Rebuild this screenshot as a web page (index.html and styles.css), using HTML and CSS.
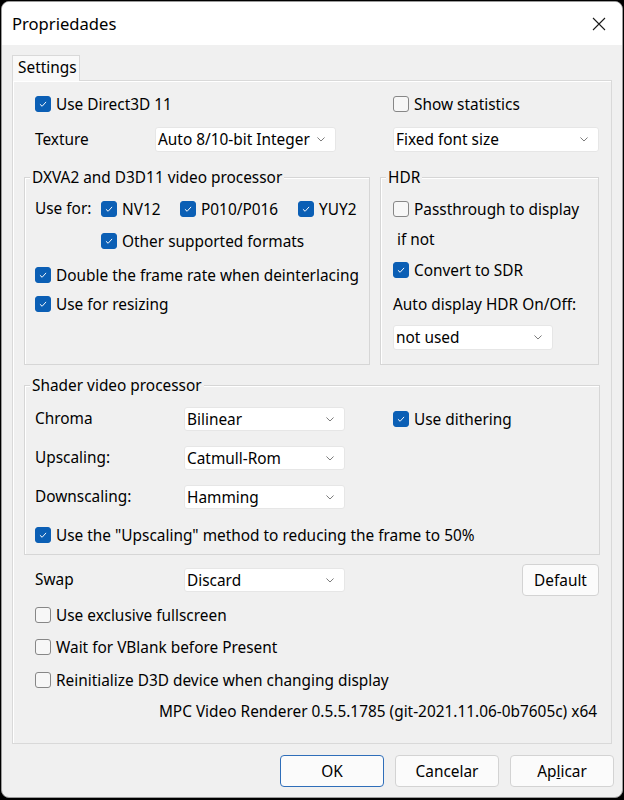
FILE: index.html
```html
<!DOCTYPE html>
<html>
<head>
<meta charset="utf-8">
<link rel="stylesheet" href="styles.css">
</head>
<body>
<div class="window">
  <div class="titlebar">
    <span class="title">Propriedades</span>
    <span class="close"><svg width="14" height="14" viewBox="0 0 14 14"><path d="M1 1 L13 13 M13 1 L1 13" stroke="#1a1a1a" stroke-width="1.1" fill="none"/></svg></span>
  </div>
  <div class="content">
    <div class="tabs"><div class="tab">Settings</div></div>
    <div class="panel">
      <div class="row2 r1">
        <div class="lcol"><label class="cb"><span class="box on"><svg viewBox="0 0 16 16"><polyline points="4.5,8.3 7,10.6 11.5,5.6"/></svg></span>Use Direct3D 11</label></div>
        <div class="rcol"><label class="cb"><span class="box"></span>Show statistics</label></div>
      </div>
      <div class="row2 r2">
        <div class="lcol"><span class="lbl lbl-tex">Texture</span><div class="combo w181"><span>Auto 8/10-bit Integer</span><svg class="chev" viewBox="0 0 9 5"><polyline points="0.5,0.5 4.5,4.5 8.5,0.5"/></svg></div></div>
        <div class="rcol"><div class="combo w206"><span>Fixed font size</span><svg class="chev" viewBox="0 0 9 5"><polyline points="0.5,0.5 4.5,4.5 8.5,0.5"/></svg></div></div>
      </div>
      <div class="row2 r3">
        <div class="group dxva">
          <div class="gtitle">DXVA2 and D3D11 video processor</div>
          <div class="drow d1">
            <span class="lbl lbl-use">Use for:</span>
            <span class="fmt f1"><label class="cb"><span class="box on"><svg viewBox="0 0 16 16"><polyline points="4.5,8.3 7,10.6 11.5,5.6"/></svg></span>NV12</label></span>
            <span class="fmt f2"><label class="cb"><span class="box on"><svg viewBox="0 0 16 16"><polyline points="4.5,8.3 7,10.6 11.5,5.6"/></svg></span>P010/P016</label></span>
            <span class="fmt"><label class="cb"><span class="box on"><svg viewBox="0 0 16 16"><polyline points="4.5,8.3 7,10.6 11.5,5.6"/></svg></span>YUY2</label></span>
          </div>
          <div class="drow d2"><label class="cb"><span class="box on"><svg viewBox="0 0 16 16"><polyline points="4.5,8.3 7,10.6 11.5,5.6"/></svg></span>Other supported formats</label></div>
          <div class="drow d3"><label class="cb"><span class="box on"><svg viewBox="0 0 16 16"><polyline points="4.5,8.3 7,10.6 11.5,5.6"/></svg></span>Double the frame rate when deinterlacing</label></div>
          <div class="drow d4"><label class="cb"><span class="box on"><svg viewBox="0 0 16 16"><polyline points="4.5,8.3 7,10.6 11.5,5.6"/></svg></span>Use for resizing</label></div>
        </div>
        <div class="group hdr">
          <div class="gtitle">HDR</div>
          <div class="hrow h1"><label class="cb"><span class="box"></span>Passthrough to display</label></div>
          <div class="hrow h2"><span class="lbl">if not</span></div>
          <div class="hrow h3"><label class="cb"><span class="box on"><svg viewBox="0 0 16 16"><polyline points="4.5,8.3 7,10.6 11.5,5.6"/></svg></span>Convert to SDR</label></div>
          <div class="hrow h4"><span class="lbl">Auto display HDR On/Off:</span></div>
          <div class="hrow h5"><div class="combo w160"><span>not used</span><svg class="chev" viewBox="0 0 9 5"><polyline points="0.5,0.5 4.5,4.5 8.5,0.5"/></svg></div></div>
        </div>
      </div>
      <div class="group shader">
        <div class="gtitle">Shader video processor</div>
        <div class="srow s1">
          <span class="lbl lbl-s">Chroma</span>
          <div class="combo w161 h24"><span>Bilinear</span><svg class="chev" viewBox="0 0 9 5"><polyline points="0.5,0.5 4.5,4.5 8.5,0.5"/></svg></div>
          <label class="cb dith"><span class="box on"><svg viewBox="0 0 16 16"><polyline points="4.5,8.3 7,10.6 11.5,5.6"/></svg></span>Use dithering</label>
        </div>
        <div class="srow s2">
          <span class="lbl lbl-s">Upscaling:</span>
          <div class="combo w161 h24"><span>Catmull-Rom</span><svg class="chev" viewBox="0 0 9 5"><polyline points="0.5,0.5 4.5,4.5 8.5,0.5"/></svg></div>
        </div>
        <div class="srow s2">
          <span class="lbl lbl-s">Downscaling:</span>
          <div class="combo w161 h24"><span>Hamming</span><svg class="chev" viewBox="0 0 9 5"><polyline points="0.5,0.5 4.5,4.5 8.5,0.5"/></svg></div>
        </div>
        <div class="srow s4"><label class="cb"><span class="box on"><svg viewBox="0 0 16 16"><polyline points="4.5,8.3 7,10.6 11.5,5.6"/></svg></span>Use the "Upscaling" method to reducing the frame to 50%</label></div>
      </div>
      <div class="swaprow">
        <span class="lbl lbl-s">Swap</span>
        <div class="combo w161 h24"><span>Discard</span><svg class="chev" viewBox="0 0 9 5"><polyline points="0.5,0.5 4.5,4.5 8.5,0.5"/></svg></div>
        <button class="btn defbtn">Default</button>
      </div>
      <div class="brow b1"><label class="cb"><span class="box"></span>Use exclusive fullscreen</label></div>
      <div class="brow b2"><label class="cb"><span class="box"></span>Wait for VBlank before Present</label></div>
      <div class="brow b3"><label class="cb"><span class="box"></span>Reinitialize D3D device when changing display</label></div>
      <div class="version">MPC Video Renderer 0.5.5.1785 (git-2021.11.06-0b7605c) x64</div>
    </div>
    <div class="buttons">
      <button class="btn dlg ok">OK</button>
      <button class="btn dlg">Cancelar</button>
      <button class="btn dlg">Ap<u>l</u>icar</button>
    </div>
  </div>
</div>
</body>
</html>
```

FILE: styles.css
```css
* { box-sizing: border-box; }
body {
  margin: 0;
  background: #000;
  font-family: "Noto Sans", "Open Sans", sans-serif;
  font-size: 15.4px;
  color: #000;
}
.window {
  margin: 1px 0 0 1px;
  width: 622px;
  height: 797px;
  border: 1px solid #9b9b9b;
  border-radius: 8px;
  overflow: hidden;
  background: #f0f0f0;
}
.titlebar {
  height: 43px;
  background: #fff;
  display: flex;
  align-items: center;
  padding-left: 10px;
}
.title { font-size: 16.6px; }
.close {
  margin-left: auto;
  width: 46px;
  display: flex;
  justify-content: center;
}
.content { padding: 10px 8px 0 10px; }
.tabs { display: flex; }
.tab {
  position: relative;
  z-index: 1;
  height: 26px;
  width: 68px;
  padding-left: 5px;
  line-height: 24px;
  background: #f9f9f9;
  border: 1px solid #d9d9d9;
  border-bottom: none;
  margin-bottom: -1px;
}
.panel {
  width: 600px;
  height: 664px;
  border: 1px solid #d9d9d9;
  box-shadow: inset 1px 1px 0 #fff;
  padding: 11px 11px 0 11px;
}
.row2 { display: grid; grid-template-columns: 356px 219px; }
.r1 { height: 24px; align-items: center; }
.r2 { height: 25px; margin-top: 11px; }
.r3 { margin-top: 25px; }
.lcol { padding-left: 11px; display: flex; align-items: center; }
.rcol { padding-left: 13px; display: flex; align-items: center; }
.lbl { white-space: nowrap; line-height: 20px; }
.lbl-tex { width: 120px; }
.cb {
  display: flex;
  align-items: center;
  gap: 5px;
  height: 20px;
  white-space: nowrap;
}
.box {
  flex: none;
  width: 16px;
  height: 16px;
  border-radius: 3px;
  border: 1px solid #878787;
  background: #f7f7f7;
}
.box.on { background: #0b5fb5; border-color: #0b5fb5; }
.box svg { display: block; width: 14px; height: 14px; }
.box svg polyline { fill: none; stroke: #fff; stroke-width: 1.1; }
.combo {
  display: flex;
  align-items: center;
  justify-content: space-between;
  height: 25px;
  background: #fff;
  border: 1px solid #e6e6e6;
  border-radius: 3px;
  padding: 0 10px 0 2px;
  white-space: nowrap;
}
.combo.h24 { height: 24px; }
.w181 { width: 181px; }
.w206 { width: 206px; }
.w160 { width: 160px; }
.w161 { width: 161px; }
.chev { width: 8px; height: 4.5px; }
.chev polyline { fill: none; stroke: #6a6a6a; stroke-width: 1; }
.group {
  border: 1px solid #d6d6d6;
  box-shadow: inset 1px 1px 0 #fff;
}
.dxva { width: 346px; height: 188px; }
.hdr { height: 188px; }
.gtitle {
  width: fit-content;
  margin: -10px 0 0 5px;
  padding: 0 2px;
  line-height: 20px;
  background: #f0f0f0;
}
.drow { display: flex; align-items: center; height: 20px; padding-left: 10px; }
.d1 { margin-top: 11px; }
.d2 { margin-top: 12px; padding-left: 76px; }
.d3 { margin-top: 14px; }
.d4 { margin-top: 9px; }
.lbl-use { width: 66px; }
.f1 { width: 79px; }
.f2 { width: 118px; }
.hrow { display: flex; align-items: center; padding-left: 12px; min-height: 20px; }
.h1 { margin-top: 11px; }
.h2 { margin-top: 11px; padding-left: 16px; }
.h3 { margin-top: 10px; }
.h4 { margin-top: 15px; }
.h5 { margin-top: 10px; }
.shader { margin-top: 20px; padding-bottom: 9px; }
.srow { display: flex; align-items: center; padding-left: 10px; height: 24px; }
.s1 { margin-top: 11px; }
.s2 { margin-top: 15px; }
.s4 { margin-top: 16px; height: 20px; }
.lbl-s { width: 149px; }
.dith { margin-left: 48px; }
.swaprow {
  display: flex;
  align-items: center;
  height: 32px;
  margin-top: 9px;
  padding-left: 11px;
  padding-right: 1px;
}
.btn {
  font-family: inherit;
  font-size: 15.4px;
  color: #000;
  background: #fbfbfb;
  border: 1px solid #d3d3d3;
  border-radius: 4px;
  padding: 0;
}
.defbtn { margin-left: auto; width: 77px; height: 32px; }
.brow { padding-left: 11px; }
.b1 { margin-top: 9px; }
.b2 { margin-top: 12px; }
.b3 { margin-top: 13px; }
.version {
  margin-top: 12px;
  line-height: 20px;
  text-align: right;
  padding-right: 3px;
  white-space: nowrap;
}
.buttons {
  display: flex;
  justify-content: flex-end;
  gap: 11px;
  margin-top: 11px;
}
.dlg { width: 104px; height: 32px; }
.ok { border-color: #2f6eb9; }
```
